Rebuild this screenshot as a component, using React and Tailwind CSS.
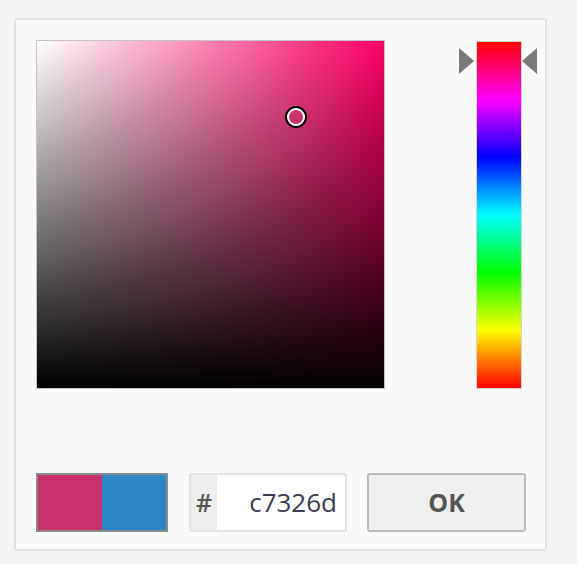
import React from 'react';

function Arrow({ dir }) {
  return (
    <svg width="15" height="26" viewBox="0 0 15 26" className="block">
      {dir === 'right' ? (
        <polygon points="0,0 15,13 0,26" fill="#7a7a7a" />
      ) : (
        <polygon points="15,0 0,13 15,26" fill="#7a7a7a" />
      )}
    </svg>
  );
}

export default function App() {
  const hex = 'c7326d';

  return (
    <div className="w-[577px] h-[564px] bg-[#f4f4f4] pl-[14px] pt-[18px]" style={{ fontFamily: '"Open Sans", "Liberation Sans", sans-serif' }}>
      <div className="w-[533px] h-[533px] bg-[#fafafa] border-2 border-[#e2e2e2] rounded-[3px] pt-[20px] pl-[20px] pr-[8px] flex flex-col">
        {/* Picker area */}
        <div className="flex justify-between h-[350px]">
          {/* Saturation / value square */}
          <div className="relative w-[349px] h-[349px] border border-[#c4c4c4] bg-[#ff0066]">
            <div className="absolute inset-0 bg-[linear-gradient(to_right,#ffffff,rgba(255,255,255,0))]" />
            <div className="absolute inset-0 bg-[linear-gradient(to_top,#000000,rgba(0,0,0,0))]" />
            <div className="absolute left-[248px] top-[65px] w-[22px] h-[22px] rounded-full border-2 border-black">
              <div className="w-full h-full rounded-full border-2 border-white" />
            </div>
          </div>

          {/* Hue slider */}
          <div className="relative flex w-[78px] h-[349px] pt-px">
            <div className="w-[17px]" />
            <div className="w-[46px] h-[348px] border border-[#d4d4d4] bg-[linear-gradient(to_bottom,#ff0000,#ff00ff,#0000ff,#00ffff,#00ff00,#ffff00,#ff0000)]" />
            <div className="w-[15px]" />
            <div className="absolute left-0 top-[8px]">
              <Arrow dir="right" />
            </div>
            <div className="absolute right-0 top-[8px]">
              <Arrow dir="left" />
            </div>
          </div>
        </div>

        {/* Bottom controls */}
        <div className="flex items-start mt-[83px] pr-[11px]">
          <div className="flex w-[132px] h-[59px] border-2 border-[#8a8a8a]">
            <div className="w-[64px] h-full bg-[#c7326d]" />
            <div className="flex-1 h-full bg-[#2e86c8]" />
          </div>

          <div className="flex ml-[21px] w-[158px] h-[59px] border-2 border-[#e2e2e2] rounded-[3px] bg-white overflow-hidden">
            <div className="w-[26px] h-full bg-[#eeeeee] flex items-center justify-center text-[25px] font-semibold text-[#555555]">#</div>
            <div className="flex-1 h-full flex items-center justify-end pr-[8px] text-[26px] text-[#3c3c4e]">{hex}</div>
          </div>

          <button className="ml-[20px] w-[159px] h-[59px] border-2 border-[#bcbcbc] rounded-[3px] bg-[#efefef] text-[25px] font-bold text-[#555555] flex items-center justify-center">
            OK
          </button>
        </div>
      </div>
    </div>
  );
}
